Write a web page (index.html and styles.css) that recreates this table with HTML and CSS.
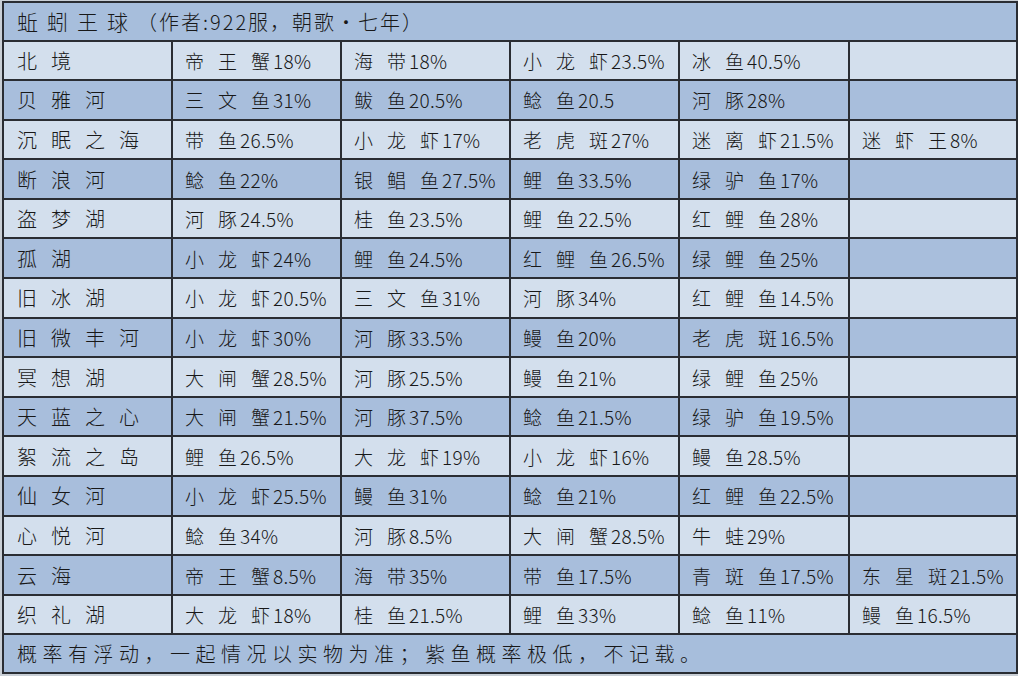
FILE: index.html
```html
<!DOCTYPE html>
<html lang="zh-CN">
<head>
<meta charset="utf-8">
<title>蚯蚓王球</title>
<link rel="stylesheet" href="styles.css">
</head>
<body>
<table class="sheet">
  <colgroup>
    <col class="c1"><col class="c2"><col class="c3"><col class="c4"><col class="c5"><col class="c6">
  </colgroup>
  <thead>
    <tr class="title"><th colspan="6"><span class="t-main">蚯蚓王球</span><span class="t-sub">（作者:922服，朝歌·七年）</span></th></tr>
  </thead>
  <tbody>
    <tr class="lt"><td class="loc">北境</td><td><span class="k k3">帝王蟹</span><span class="n">18%</span></td><td><span class="k k2">海带</span><span class="n">18%</span></td><td><span class="k k3">小龙虾</span><span class="n">23.5%</span></td><td><span class="k k2">冰鱼</span><span class="n">40.5%</span></td><td></td></tr>
    <tr class="dk"><td class="loc">贝雅河</td><td><span class="k k3">三文鱼</span><span class="n">31%</span></td><td><span class="k k2">鲅鱼</span><span class="n">20.5%</span></td><td><span class="k k2">鲶鱼</span><span class="n">20.5</span></td><td><span class="k k2">河豚</span><span class="n">28%</span></td><td></td></tr>
    <tr class="lt"><td class="loc">沉眠之海</td><td><span class="k k2">带鱼</span><span class="n">26.5%</span></td><td><span class="k k3">小龙虾</span><span class="n">17%</span></td><td><span class="k k3">老虎斑</span><span class="n">27%</span></td><td><span class="k k3">迷离虾</span><span class="n">21.5%</span></td><td><span class="k k3">迷虾王</span><span class="n">8%</span></td></tr>
    <tr class="dk"><td class="loc">断浪河</td><td><span class="k k2">鲶鱼</span><span class="n">22%</span></td><td><span class="k k3">银鲳鱼</span><span class="n">27.5%</span></td><td><span class="k k2">鲤鱼</span><span class="n">33.5%</span></td><td><span class="k k3">绿驴鱼</span><span class="n">17%</span></td><td></td></tr>
    <tr class="lt"><td class="loc">盗梦湖</td><td><span class="k k2">河豚</span><span class="n">24.5%</span></td><td><span class="k k2">桂鱼</span><span class="n">23.5%</span></td><td><span class="k k2">鲤鱼</span><span class="n">22.5%</span></td><td><span class="k k3">红鲤鱼</span><span class="n">28%</span></td><td></td></tr>
    <tr class="dk"><td class="loc">孤湖</td><td><span class="k k3">小龙虾</span><span class="n">24%</span></td><td><span class="k k2">鲤鱼</span><span class="n">24.5%</span></td><td><span class="k k3">红鲤鱼</span><span class="n">26.5%</span></td><td><span class="k k3">绿鲤鱼</span><span class="n">25%</span></td><td></td></tr>
    <tr class="lt"><td class="loc">旧冰湖</td><td><span class="k k3">小龙虾</span><span class="n">20.5%</span></td><td><span class="k k3">三文鱼</span><span class="n">31%</span></td><td><span class="k k2">河豚</span><span class="n">34%</span></td><td><span class="k k3">红鲤鱼</span><span class="n">14.5%</span></td><td></td></tr>
    <tr class="dk"><td class="loc">旧微丰河</td><td><span class="k k3">小龙虾</span><span class="n">30%</span></td><td><span class="k k2">河豚</span><span class="n">33.5%</span></td><td><span class="k k2">鳗鱼</span><span class="n">20%</span></td><td><span class="k k3">老虎斑</span><span class="n">16.5%</span></td><td></td></tr>
    <tr class="lt"><td class="loc">冥想湖</td><td><span class="k k3">大闸蟹</span><span class="n">28.5%</span></td><td><span class="k k2">河豚</span><span class="n">25.5%</span></td><td><span class="k k2">鳗鱼</span><span class="n">21%</span></td><td><span class="k k3">绿鲤鱼</span><span class="n">25%</span></td><td></td></tr>
    <tr class="dk"><td class="loc">天蓝之心</td><td><span class="k k3">大闸蟹</span><span class="n">21.5%</span></td><td><span class="k k2">河豚</span><span class="n">37.5%</span></td><td><span class="k k2">鲶鱼</span><span class="n">21.5%</span></td><td><span class="k k3">绿驴鱼</span><span class="n">19.5%</span></td><td></td></tr>
    <tr class="lt"><td class="loc">絮流之岛</td><td><span class="k k2">鲤鱼</span><span class="n">26.5%</span></td><td><span class="k k3">大龙虾</span><span class="n">19%</span></td><td><span class="k k3">小龙虾</span><span class="n">16%</span></td><td><span class="k k2">鳗鱼</span><span class="n">28.5%</span></td><td></td></tr>
    <tr class="dk"><td class="loc">仙女河</td><td><span class="k k3">小龙虾</span><span class="n">25.5%</span></td><td><span class="k k2">鳗鱼</span><span class="n">31%</span></td><td><span class="k k2">鲶鱼</span><span class="n">21%</span></td><td><span class="k k3">红鲤鱼</span><span class="n">22.5%</span></td><td></td></tr>
    <tr class="lt"><td class="loc">心悦河</td><td><span class="k k2">鲶鱼</span><span class="n">34%</span></td><td><span class="k k2">河豚</span><span class="n">8.5%</span></td><td><span class="k k3">大闸蟹</span><span class="n">28.5%</span></td><td><span class="k k2">牛蛙</span><span class="n">29%</span></td><td></td></tr>
    <tr class="dk"><td class="loc">云海</td><td><span class="k k3">帝王蟹</span><span class="n">8.5%</span></td><td><span class="k k2">海带</span><span class="n">35%</span></td><td><span class="k k2">带鱼</span><span class="n">17.5%</span></td><td><span class="k k3">青斑鱼</span><span class="n">17.5%</span></td><td><span class="k k3">东星斑</span><span class="n">21.5%</span></td></tr>
    <tr class="lt"><td class="loc">织礼湖</td><td><span class="k k3">大龙虾</span><span class="n">18%</span></td><td><span class="k k2">桂鱼</span><span class="n">21.5%</span></td><td><span class="k k2">鲤鱼</span><span class="n">33%</span></td><td><span class="k k2">鲶鱼</span><span class="n">11%</span></td><td><span class="k k2">鳗鱼</span><span class="n">16.5%</span></td></tr>
  </tbody>
  <tfoot>
    <tr class="foot"><td colspan="6">概率有浮动，一起情况以实物为准；紫鱼概率极低，不记载。</td></tr>
  </tfoot>
</table>
</body>
</html>
```

FILE: styles.css
```css
html, body {
  margin: 0;
  padding: 0;
  background: #c9cfd6;
}

body {
  width: 1018px;
  height: 676px;
  overflow: hidden;
  font-family: "Noto Sans CJK SC", "Noto Sans", sans-serif;
  color: #181818;
}

.sheet {
  margin: 1px 0 0 2px;
  width: 1014px;
  border-collapse: collapse;
  table-layout: fixed;
  border: 2px solid #2a2d33;
}

.c1 { width: 169px; }
.c2 { width: 169px; }
.c3 { width: 169px; }
.c4 { width: 169px; }
.c5 { width: 170px; }
.c6 { width: 168px; }

.sheet th,
.sheet td {
  border: 2px solid #2a2d33;
  padding: 0 0 0 12px;
  font-weight: 300;
  font-size: 19px;
  text-align: left;
  white-space: nowrap;
  overflow: hidden;
  vertical-align: middle;
}

.sheet td.loc {
  padding-left: 13px;
  font-size: 20px;
  letter-spacing: 14px;
}

.title th {
  height: 36.5px;
  background: #a7bedc;
  font-size: 21px;
  padding-left: 13px;
}

.t-main {
  letter-spacing: 9px;
}

.t-sub {
  font-size: 20px;
  letter-spacing: 2px;
}

.lt td {
  height: 37.6px;
  background: #d3dfed;
}

.dk td {
  height: 37.6px;
  background: #a8bedc;
}

.k {
  display: inline-block;
  text-align: justify;
  text-align-last: justify;
  letter-spacing: 0;
}

.k2 { width: 52px; }
.k3 { width: 85px; }

.n {
  margin-left: 3px;
  letter-spacing: 0.3px;
}

.foot td {
  height: 37px;
  background: #a7bedc;
  font-size: 20px;
  letter-spacing: 5.5px;
  padding-left: 13px;
}
```
